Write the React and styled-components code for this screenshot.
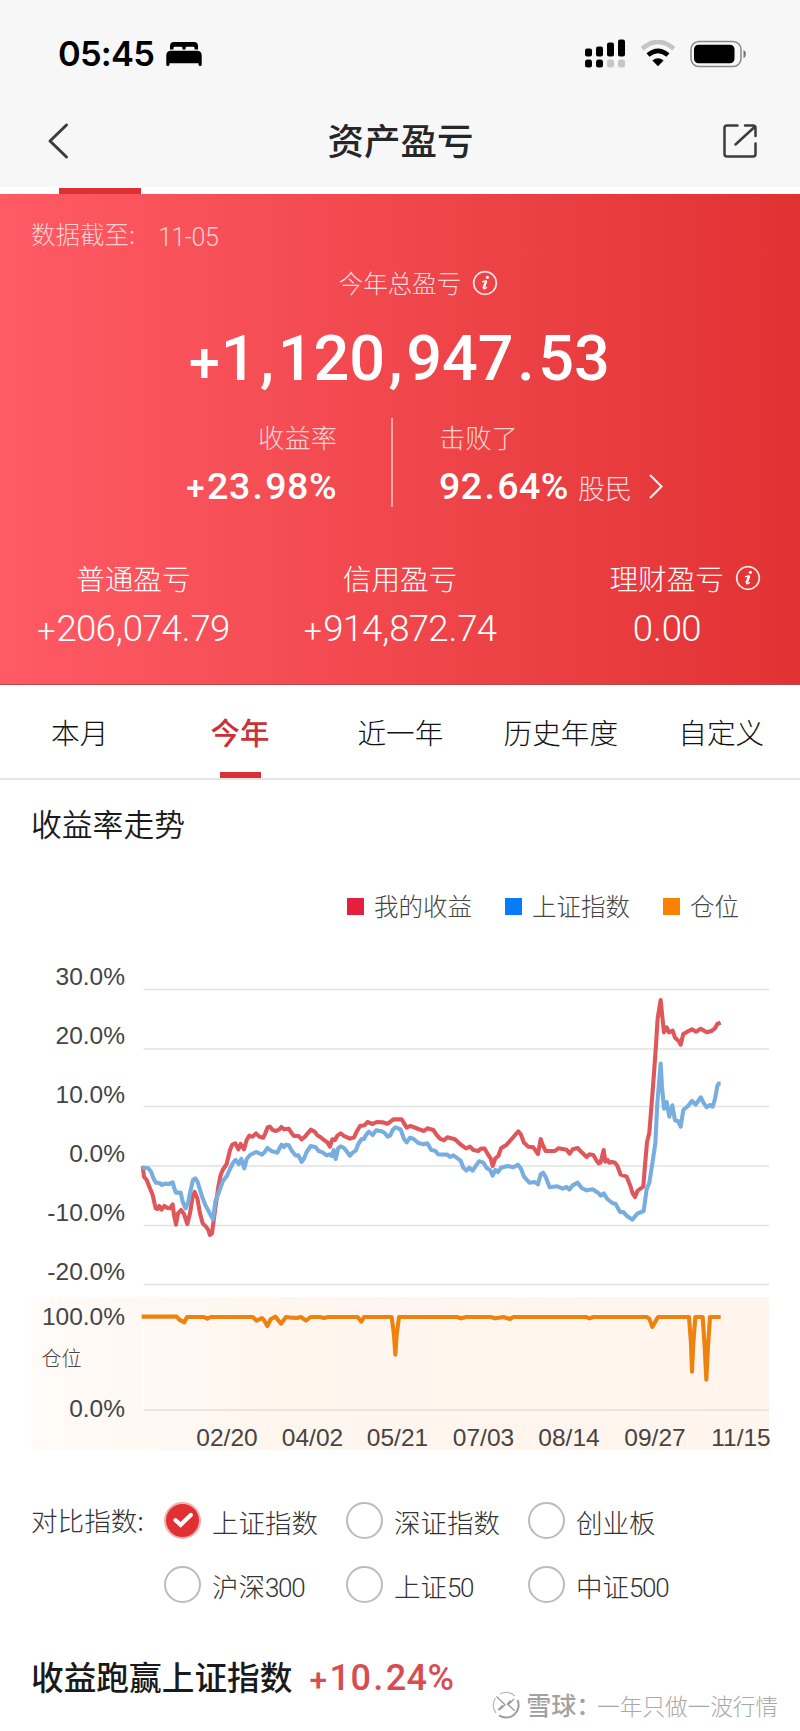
import React from "react";
import styled, { createGlobalStyle } from "styled-components";

const CJK = '"Noto Sans CJK SC", sans-serif';
const DIN = 'Roboto, "Noto Sans CJK SC", sans-serif';

const Global = createGlobalStyle`
  * { box-sizing: border-box; }
  body { margin: 0; background: #fff; font-family: ${CJK}; color: #1a1a1a; }
  svg { display: block; flex: none; }
`;

const Screen = styled.main`
  width: 800px;
  height: 1731px;
  overflow: hidden;
  display: flex;
  flex-direction: column;
  white-space: nowrap;
`;

const TopArea = styled.header`
  height: 187px;
  background: #f7f7f7;
`;

const StatusBar = styled.div`
  height: 98px;
  padding: 9px 53px 0 58px;
  display: flex;
  align-items: center;
`;

const Clock = styled.span`
  width: 108px;
  font: 600 34.5px/40px Inter, sans-serif;
  letter-spacing: -0.8px;
  color: #000;
`;

const StatusIcons = styled.div`
  margin-left: auto;
  display: flex;
  align-items: center;
  gap: 14px;
`;

const NavBar = styled.div`
  height: 86px;
  padding: 0 43px 0 46px;
  display: flex;
  align-items: center;
  justify-content: space-between;
`;

const NavTitle = styled.h1`
  margin: 0;
  padding: 0 0 2px 8px;
  font-size: 36.5px;
  line-height: 50px;
  font-weight: 500;
  color: #262626;
`;

const Strip = styled.div`
  height: 7px;
  padding: 1px 0 0 59px;
`;

const StripMark = styled.div`
  width: 82px;
  height: 6px;
  background: #dd3033;
`;

const Panel = styled.section`
  height: 491px;
  background: linear-gradient(90deg, #ff5a65 0%, #f0474c 50%, #e13233 100%);
  border-bottom: 1px solid #b8474b;
  color: #fff;
  display: flex;
  flex-direction: column;
`;

const DateLine = styled.div`
  height: 68px;
  padding: 12px 0 0 31px;
  display: flex;
  gap: 23px;
  font-size: 24.5px;
  line-height: 56px;
  font-weight: 300;
  color: #ffd0d2;
`;

const DateValue = styled.div`
  padding-top: 2px;
`;

const TotalLabel = styled.div`
  height: 42px;
  display: flex;
  justify-content: center;
  align-items: center;
  gap: 11px;
  padding-left: 37px;
  font-size: 24.5px;
  line-height: 42px;
  font-weight: 300;
  color: #ffdadb;
`;

const Numeric = styled.span`
  font-family: ${DIN};
  font-size: ${(p) => p.$size}px;
  font-weight: ${(p) => p.$weight || 400};
  letter-spacing: ${(p) => p.$spacing || 0}px;
`;

const Mark = styled.span`
  padding: 0 ${(p) => p.$pad}px;
`;

const Plus = styled.span`
  display: inline-block;
  line-height: 1;
  font-size: 0.88em;
  transform: translateY(${(p) => p.$drop}em);
  margin-right: ${(p) => p.$gap}px;
`;

const TotalValue = styled.div`
  height: 96px;
  line-height: 110px;
  padding-left: 189px;
`;

const RateRow = styled.div`
  height: 114px;
  padding-top: 17px;
  display: flex;
`;

const RateBlock = styled.div`
  width: ${(p) => p.$width}px;
  display: flex;
  flex-direction: column;
  align-items: ${(p) => p.$align};
`;

const RateLabel = styled.div`
  font-size: 26.3px;
  line-height: 40px;
  font-weight: 300;
  color: #ffd4d5;
`;

const RateValue = styled.div`
  display: flex;
  align-items: center;
  height: 54px;
  margin-top: 2px;
  line-height: 54px;
`;

const Unit = styled.span`
  margin: 4px 16px 0 9px;
  font-size: 27px;
  font-weight: 300;
  color: #ffd9da;
`;

const RateDivider = styled.div`
  width: 2px;
  height: 89px;
  margin: 1px 46px 0 54px;
  background: #f9a9ab;
`;

const Breakdown = styled.div`
  display: grid;
  grid-template-columns: repeat(3, 1fr);
  padding-top: 42px;
`;

const BreakdownItem = styled.div`
  display: flex;
  flex-direction: column;
  align-items: center;
`;

const BreakdownLabel = styled.div`
  height: 44px;
  display: flex;
  align-items: center;
  gap: 11px;
  margin-right: ${(p) => (p.$withInfo ? -37 : 0)}px;
  font-size: 28.6px;
  line-height: 44px;
  font-weight: 300;
`;

const BreakdownValue = styled.div`
  line-height: 50px;
  padding-top: 4px;
`;

const Tabs = styled.nav`
  height: 95px;
  border-bottom: 2px solid #e5e5e5;
  display: grid;
  grid-template-columns: repeat(5, 160.4px);
  overflow: hidden;
`;

const Tab = styled.div`
  display: flex;
  flex-direction: column;
  align-items: center;
  justify-content: space-between;
  padding-top: ${(p) => (p.$active ? 21 : 22)}px;
  padding-right: 1px;
  font-size: ${(p) => (p.$active ? 29.5 : 28.7)}px;
  line-height: 50px;
  font-weight: ${(p) => (p.$active ? 500 : 300)};
  color: ${(p) => (p.$active ? "#c93236" : "#111")};
  &::after {
    content: "";
    width: 41px;
    height: 6px;
    background: ${(p) => (p.$active ? "#d93236" : "transparent")};
  }
`;

const SectionTitle = styled.h2`
  margin: 0;
  height: 88px;
  padding-left: 31px;
  font-size: 30.8px;
  line-height: 86px;
  font-weight: 350;
`;

const Legend = styled.div`
  height: 82px;
  padding: 13px 61px 0 0;
  display: flex;
  justify-content: flex-end;
  gap: 33px;
`;

const LegendItem = styled.div`
  display: flex;
  align-items: center;
  gap: 10px;
  height: 50px;
  font-size: 24.5px;
  line-height: 50px;
  font-weight: 300;
  color: #444;
  &::before {
    content: "";
    width: 17px;
    height: 17px;
    background: ${(p) => p.$color};
  }
`;

const ChartText = styled.text`
  font-family: ${(p) => (p.$cjk ? CJK : '"Liberation Sans", sans-serif')};
  font-size: ${(p) => (p.$cjk ? 20 : 24.5)}px;
  font-weight: ${(p) => (p.$cjk ? 300 : 400)};
  fill: #444;
`;

const Compare = styled.section`
  height: 164px;
  padding: 30px 0 0 31px;
  display: flex;
`;

const CompareLabel = styled.div`
  width: 133px;
  font-size: 26.6px;
  line-height: 64px;
  font-weight: 300;
  color: #333;
`;

const Options = styled.div`
  display: grid;
  grid-template-columns: repeat(3, 182px);
  grid-auto-rows: 64px;
`;

const Option = styled.div`
  display: flex;
  align-items: center;
  gap: 11px;
  font-size: 26.5px;
  font-weight: 300;
  color: #333;
`;

const OptionName = styled.span`
  padding-top: 3px;
`;

const Radio = styled.i`
  width: 37px;
  height: 37px;
  border-radius: 50%;
  border: ${(p) => (p.$checked ? "2px solid #f3b0b1" : "2px solid #bcbcbc")};
  background: ${(p) => (p.$checked ? "#e13033" : "#fff")};
  display: flex;
  align-items: center;
  justify-content: center;
`;

const Result = styled.div`
  height: 70px;
  padding: 21px 0 0 31px;
  display: flex;
  gap: 17px;
  font-size: 32.7px;
  line-height: 66px;
  font-weight: 500;
`;

const ResultValue = styled.div`
  color: #d84d51;
`;

const Watermark = styled.footer`
  margin-top: -4px;
  padding-right: 22px;
  height: 34px;
  display: flex;
  justify-content: flex-end;
  align-items: center;
  gap: 6px;
  font-size: 22.6px;
  line-height: 34px;
  font-weight: 300;
  color: #a9a9a9;
`;

const Brand = styled.b`
  margin-right: -4px;
  font-size: 25px;
  font-weight: 500;
  color: #a2a2a2;
`;

/* DIN numerals leave more room round the separators and have a small, low plus. */
const Figures = ({ children, size, weight, spacing, pad = 0, plusGap = 2 }) => (
  <Numeric $size={size} $weight={weight} $spacing={spacing}>
    {children.split(/([+,.])/).filter(Boolean).map((part, i) => {
      if (part === "+") return <Plus key={i} $drop={0.04} $gap={plusGap}>+</Plus>;
      if (part === "," || part === ".") return <Mark key={i} $pad={pad}>{part}</Mark>;
      return part;
    })}
  </Numeric>
);

const InfoIcon = () => (
  <svg width="26" height="26" viewBox="0 0 26 26">
    <circle cx="13" cy="13" r="11.3" fill="none" stroke="#ffe4e4" strokeWidth="1.7" />
    <circle cx="15.4" cy="7.3" r="1.6" fill="#fff" />
    <path d="M10 11.8 14.6 10.6" stroke="#fff" strokeWidth="1.3" />
    <path d="M14.200 11 11.800 17.500" stroke="#fff" strokeWidth="2.400" />
    <path d="M11.400 16.500Q10.500 20.600 15 17.300" fill="none" stroke="#fff" strokeWidth="1.400" />
  </svg>
);

const BedIcon = () => (
  <svg width="36" height="26" viewBox="0 0 36 26">
    <path d="M4 8.500V5q0-4 4-4h20q4 0 4 4v3.500h-3.500V7q0-1.300-1.400-1.300h-6.300q-1.300 0-1.300 1.300v1.500h-3V7q0-1.300-1.300-1.300H8.900Q7.500 5.700 7.500 7v1.500Z" />
    <path d="M.3 24V14.500q0-4.700 4.700-4.700h26q4.700 0 4.700 4.700V24q0 1-1.500 1t-1.600-1v-1.700H3.400V24q0 1-1.600 1T.3 24Z" />
  </svg>
);

const SignalIcon = () => (
  <svg width="41" height="29" viewBox="0 0 41 29">
    <rect x="0" y="9.500" width="7" height="8" rx="2" />
    <rect x="11" y="7.500" width="7" height="10" rx="2" />
    <rect x="22" y="3.500" width="7" height="14" rx="2" />
    <rect x="33" y="0.500" width="7" height="17" rx="2" />
    <rect x="0" y="20.500" width="7" height="8" rx="2.500" />
    <rect x="11" y="20.500" width="7" height="8" rx="2.500" />
    <rect x="22" y="20.500" width="7" height="8" rx="2.500" fill="#c6c6c6" />
    <rect x="33" y="20.500" width="7" height="8" rx="2.500" fill="#c6c6c6" />
  </svg>
);

const WifiIcon = () => (
  <svg width="36" height="28" viewBox="0 0 36 28" fill="none">
    <path d="M2.200 8.700Q18-4.900 33.800 8.700" stroke="#c4c4c4" strokeWidth="4.600" />
    <path d="M8 15Q18 6.800 28 15" stroke="#000" strokeWidth="4.600" />
    <path d="M18 26.200 12.400 20.500Q18 16.200 23.600 20.500Z" fill="#000" />
  </svg>
);

const BatteryIcon = () => (
  <svg width="57" height="28" viewBox="0 0 57 28">
    <rect x="1" y="1.500" width="50" height="25" rx="8" fill="none" stroke="#888" strokeWidth="1.500" />
    <rect x="4" y="4.800" width="40.500" height="18.400" rx="4.500" />
    <path d="M53.500 10Q56 11 56 14t-2.500 4Z" fill="#777" />
  </svg>
);

const BackIcon = () => (
  <svg width="24" height="38" viewBox="0 0 24 38">
    <path d="M20.500 3 4 19 20.500 35" fill="none" stroke="#3c3c3c" strokeWidth="3" strokeLinecap="round" strokeLinejoin="round" />
  </svg>
);

const ShareIcon = () => (
  <svg width="34" height="34" viewBox="0 0 34 34" fill="none" stroke="#3c3c3c" strokeWidth="2.500" strokeLinecap="round">
    <path d="M14.500 1.500H4Q1.500 1.500 1.500 4v26q0 2.500 2.500 2.500h26q2.500 0 2.500-2.500V19.500" />
    <path d="M22 1.500h8q2.500 0 2.500 2.500v8M12.500 20.500 31 3.500" />
  </svg>
);

const ChevronIcon = () => (
  <svg width="16" height="27" viewBox="0 0 16 27">
    <path d="M2 2 13.500 13.500 2 25" fill="none" stroke="#ffe4e4" strokeWidth="2.200" />
  </svg>
);

const CheckIcon = () => (
  <svg width="22" height="18" viewBox="0 0 22 18">
    <path d="M3.500 9.200 8.600 13.800 18.800 4" fill="none" stroke="#fff" strokeWidth="4.200" strokeLinecap="round" />
  </svg>
);

const SnowballLogo = () => (
  <svg width="28" height="28" viewBox="0 0 28 28" fill="none" stroke="#9c9c9c" strokeWidth="1.300">
    <path d="M4 22A12.500 12.500 0 0 1 3.500 7M8 2.900a12.500 12.500 0 0 1 15 2.200" stroke="#bdbdbd" />
    <path d="M25.500 9A12.500 12.500 0 0 1 7 24.400" strokeWidth="2" />
    <path d="M4.500 5.500 13 13.800 7.500 19M22 8l-5.800 5.800 6.500 6M10.800 14.200 6 19M18.500 9.500 15 13.500" />
  </svg>
);

/* Series are plotted on a grid of one third of a pixel. */
const RED =
  "428,648 432,680 440,690 448,710 458,735 467,775 473,777 478,768 485,779 493,768 503,774 510,775 518,763 522,795 528,824 534,790 543,780 552,792 562,822 570,790 578,740 584,726 592,745 600,790 608,820 618,830 625,840 630,855 636,850 640,820 648,760 655,710 662,675 668,660 680,642 690,600 697,584 706,580 715,598 722,582 732,598 740,570 748,557 758,560 768,550 778,560 790,563 796,550 803,532 810,530 818,540 828,543 838,538 844,531 852,538 866,536 874,548 882,558 896,558 905,568 915,560 925,548 932,539 944,545 952,556 962,562 972,570 982,577 990,590 997,568 1005,570 1012,557 1022,550 1032,558 1042,562 1050,566 1062,562 1070,545 1080,528 1094,526 1102,516 1118,522 1130,516 1148,517 1162,521 1170,516 1180,508 1205,508 1220,533 1230,528 1240,531 1255,537 1272,543 1282,535 1300,540 1310,555 1320,566 1332,571 1342,562 1365,568 1380,582 1398,595 1410,590 1420,600 1435,603 1443,596 1454,596 1465,615 1472,625 1478,648 1486,625 1495,618 1503,595 1520,584 1535,567 1548,552 1555,544 1562,552 1572,578 1585,590 1600,592 1614,612 1622,567 1628,585 1637,603 1665,603 1675,595 1700,599 1709,611 1718,598 1733,594 1745,607 1760,621 1768,613 1780,615 1790,632 1796,640 1802,637 1811,600 1816,635 1823,630 1828,638 1836,636 1845,638 1852,647 1862,674 1880,680 1890,705 1898,730 1905,741 1913,722 1930,710 1935,645 1941,577 1948,548 1955,460 1962,370 1968,285 1973,205 1982,150 1987,200 1992,247 2000,232 2007,247 2018,242 2025,263 2036,273 2042,284 2050,252 2062,245 2076,238 2088,245 2102,236 2120,247 2134,243 2145,235 2152,222 2162,218";
const BLUE =
  "426,650 432,654 444,654 453,665 460,684 467,698 478,699 486,705 495,701 506,702 518,697 523,715 528,728 542,728 548,755 557,775 565,755 572,720 579,690 586,685 593,696 600,720 608,745 616,765 625,782 632,795 639,808 646,755 656,728 668,695 681,677 690,657 700,637 707,630 716,642 724,627 733,655 740,627 750,615 768,606 786,614 795,605 802,594 816,604 832,608 839,594 845,584 852,591 858,584 866,586 876,603 886,616 895,616 905,636 912,625 920,606 932,588 947,592 956,603 968,607 980,616 988,613 996,618 1001,600 1007,627 1015,594 1022,589 1032,594 1041,605 1050,617 1058,608 1067,602 1075,582 1085,567 1092,567 1098,555 1107,545 1118,555 1128,541 1145,544 1154,549 1163,560 1171,556 1178,540 1186,532 1202,538 1212,567 1220,577 1230,563 1241,567 1255,579 1270,583 1282,580 1294,600 1305,602 1315,613 1342,614 1350,621 1360,616 1382,632 1390,653 1399,662 1408,653 1418,662 1428,647 1437,634 1450,638 1460,654 1470,660 1478,677 1486,660 1494,666 1503,653 1522,648 1540,652 1554,644 1563,656 1572,680 1588,698 1605,696 1614,703 1622,673 1629,668 1638,683 1649,712 1672,709 1688,716 1700,711 1708,719 1718,706 1733,698 1745,714 1760,721 1778,718 1795,729 1802,737 1811,730 1822,747 1837,759 1847,762 1860,786 1870,786 1882,799 1897,809 1912,791 1931,783 1940,718 1948,698 1957,640 1966,580 1972,460 1982,341 1986,410 1992,476 2000,456 2008,500 2017,466 2025,511 2035,514 2042,530 2050,480 2064,468 2076,453 2087,464 2102,442 2110,457 2120,472 2130,465 2138,470 2145,447 2152,408 2156,401 2162,401";
const ORANGE =
  "425,1100 530,1100 538,1109 553,1117 561,1101 612,1101 622,1106 632,1101 758,1101 770,1112 786,1104 793,1112 802,1128 812,1108 826,1100 843,1121 858,1101 875,1103 890,1104 903,1101 918,1112 932,1101 960,1101 972,1104 985,1101 1073,1101 1084,1115 1092,1101 1175,1101 1182,1155 1186,1214 1190,1155 1197,1101 1370,1101 1384,1105 1398,1101 1472,1101 1486,1105 1510,1101 1530,1107 1540,1101 1758,1101 1768,1105 1780,1101 1940,1101 1948,1106 1957,1131 1974,1101 2067,1101 2073,1180 2076,1265 2080,1180 2086,1101 2108,1101 2114,1190 2119,1289 2124,1190 2130,1101 2162,1101";

const Y_LABELS = [
  ["30.0%", 985], ["20.0%", 1043.5], ["10.0%", 1102.5], ["0.0%", 1161.5],
  ["-10.0%", 1220.5], ["-20.0%", 1279.5], ["100.0%", 1325], ["0.0%", 1417],
];
const X_LABELS = [
  ["02/20", 227], ["04/02", 312.5], ["05/21", 397.5], ["07/03", 483.5],
  ["08/14", 569], ["09/27", 655], ["11/15", 741],
];
const GRID = [989.5, 1049, 1106.5, 1166, 1225.5, 1284.5, 1410];

const Chart = () => (
  <svg width="800" height="508" viewBox="0 950 800 508">
    <defs>
      <linearGradient id="band" x1="0" x2="1">
        <stop offset="0" stopColor="#fffbf8" />
        <stop offset="0.3" stopColor="#fff6ef" />
        <stop offset="1" stopColor="#fff5ec" />
      </linearGradient>
    </defs>
    <rect x="31" y="1297" width="738" height="153" fill="url(#band)" />
    {GRID.map((y) => (
      <line key={y} x1="143.5" x2="769" y1={y} y2={y} stroke="#e2e2e2" strokeWidth="1.7" />
    ))}
    <line x1="142.5" x2="142.5" y1="1318" y2="1409" stroke="#fff" strokeWidth="1.5" />
    <g transform="translate(0 950) scale(0.33333)" fill="none" strokeWidth="12.3" strokeLinejoin="round">
      <polyline points={RED} stroke="#e0575b" />
      <polyline points={BLUE} stroke="#78ade0" />
      <polyline points={ORANGE} stroke="#ee820e" />
    </g>
    {Y_LABELS.map(([label, y]) => (
      <ChartText key={y} x="125" y={y} textAnchor="end">{label}</ChartText>
    ))}
    <ChartText $cjk x="41.5" y="1366">仓位</ChartText>
    {X_LABELS.map(([label, x]) => (
      <ChartText key={label} x={x} y="1446" textAnchor="middle">{label}</ChartText>
    ))}
  </svg>
);

const TABS = ["本月", "今年", "近一年", "历史年度", "自定义"];
const OPTIONS = [
  ["上证指数"], ["深证指数"], ["创业板"],
  ["沪深", "300"], ["上证", "50"], ["中证", "500"],
];
const LEGEND = [["我的收益", "#e3213f"], ["上证指数", "#087cf8"], ["仓位", "#fb8200"]];
const BREAKDOWN = [
  { label: "普通盈亏", value: "+206,074.79" },
  { label: "信用盈亏", value: "+914,872.74" },
  { label: "理财盈亏", value: "0.00", info: true },
];

export default function App() {
  return (
    <Screen>
      <Global />
      <TopArea>
        <StatusBar>
          <Clock>05:45</Clock>
          <BedIcon />
          <StatusIcons>
            <SignalIcon />
            <WifiIcon />
            <BatteryIcon />
          </StatusIcons>
        </StatusBar>
        <NavBar>
          <BackIcon />
          <NavTitle>资产盈亏</NavTitle>
          <ShareIcon />
        </NavBar>
      </TopArea>
      <Strip><StripMark /></Strip>
      <Panel>
        <DateLine>
          <span>数据截至:</span>
          <DateValue>
            <Numeric $size={25} $weight={300} $spacing={-0.5}>11-05</Numeric>
          </DateValue>
        </DateLine>
        <TotalLabel>今年总盈亏<InfoIcon /></TotalLabel>
        <TotalValue>
          <Figures size={63} weight={500} pad={3.5} plusGap={1}>+1,120,947.53</Figures>
        </TotalValue>
        <RateRow>
          <RateBlock $width={337} $align="flex-end">
            <RateLabel>收益率</RateLabel>
            <RateValue>
              <Figures size={37.5} weight={500} pad={1.8} spacing={0.5}>+23.98%</Figures>
            </RateValue>
          </RateBlock>
          <RateDivider />
          <RateBlock $width={260} $align="flex-start">
            <RateLabel>击败了</RateLabel>
            <RateValue>
              <Figures size={37.5} weight={500} pad={1.8} spacing={0.5}>92.64%</Figures>
              <Unit>股民</Unit>
              <ChevronIcon />
            </RateValue>
          </RateBlock>
        </RateRow>
        <Breakdown>
          {BREAKDOWN.map((item) => (
            <BreakdownItem key={item.label}>
              <BreakdownLabel $withInfo={item.info}>
                {item.label}
                {item.info && <InfoIcon />}
              </BreakdownLabel>
              <BreakdownValue>
                <Figures size={36.5} weight={300} pad={0.8} spacing={-0.8}>{item.value}</Figures>
              </BreakdownValue>
            </BreakdownItem>
          ))}
        </Breakdown>
      </Panel>
      <Tabs>
        {TABS.map((t, i) => (
          <Tab key={t} $active={i === 1}>{t}</Tab>
        ))}
      </Tabs>
      <SectionTitle>收益率走势</SectionTitle>
      <Legend>
        {LEGEND.map(([name, color]) => (
          <LegendItem key={name} $color={color}>{name}</LegendItem>
        ))}
      </Legend>
      <Chart />
      <Compare>
        <CompareLabel>对比指数:</CompareLabel>
        <Options>
          {OPTIONS.map(([name, digits], i) => (
            <Option key={name + (digits || "")}>
              <Radio $checked={i === 0}>{i === 0 && <CheckIcon />}</Radio>
              <OptionName>
                {name}
                {digits && <Numeric $size={26} $weight={300} $spacing={-1.3}>{digits}</Numeric>}
              </OptionName>
            </Option>
          ))}
        </Options>
      </Compare>
      <Result>
        收益跑赢上证指数
        <ResultValue>
          <Figures size={36} weight={500} pad={1.8} spacing={0.5}>+10.24%</Figures>
        </ResultValue>
      </Result>
      <Watermark>
        <SnowballLogo />
        <span><Brand>雪球：</Brand>一年只做一波行情</span>
      </Watermark>
    </Screen>
  );
}
